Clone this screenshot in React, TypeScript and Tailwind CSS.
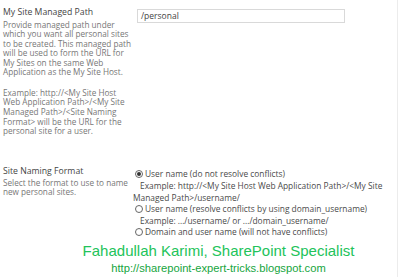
import React from "react";

const seg = { fontFamily: '"Open Sans", "Noto Sans", sans-serif' };

function Radio({ checked }: { checked?: boolean }) {
  return (
    <span className="inline-flex items-center justify-center w-[8px] h-[8px] rounded-full border border-[#666] ml-[1px] mr-[2px] shrink-0">
      {checked && <span className="w-[4px] h-[4px] rounded-full bg-[#333]" />}
    </span>
  );
}

export default function App() {
  return (
    <div className="w-[400px] h-[277px] bg-white overflow-hidden">
      <div className="w-[398px] h-[277px] border-r border-[#ececec] flex flex-col whitespace-nowrap" style={seg}>
        {/* Section 1 */}
        <div className="flex pt-[6px]">
          <div className="w-[137px] pl-[3px] shrink-0">
            <div className="text-[8.7px] leading-[12px] text-[#444]">My Site Managed Path</div>
            <div className="text-[8.2px] leading-[9.6px] text-[#777] mt-[1.5px]">
              <p>Provide managed path under<br />which you want all personal sites<br />to be created. This managed path<br />will be used to form the URL for<br />My Sites on the same Web<br />Application as the My Site Host.</p>
              <p className="mt-[10.8px]">Example: http://&lt;My Site Host<br />Web Application Path&gt;/&lt;My Site<br />Managed Path&gt;/&lt;Site Naming<br />Format&gt; will be the URL for the<br />personal site for a user.</p>
            </div>
          </div>
          <div className="pt-[3px]">
            <div className="w-[208px] h-[14px] border border-[#d9d9d9] flex items-center pl-[3px] text-[8.5px] text-[#444]">/personal</div>
          </div>
        </div>

        {/* Section 2 */}
        <div className="flex mt-[29px]">
          <div className="w-[133px] pl-[3px] shrink-0">
            <div className="text-[8.7px] leading-[12px] text-[#444]">Site Naming Format</div>
            <div className="text-[8.2px] leading-[9.6px] text-[#777] mt-[1px]">Select the format to use to name<br />new personal sites.</div>
          </div>
          <div className="text-[8.4px] leading-[11.6px] text-[#4a4a4a] pt-[3.5px]">
            <div className="flex items-center pl-[1px]"><Radio checked />User name (do not resolve conflicts)</div>
            <div className="pl-[7px]">Example: http://&lt;My Site Host Web Application Path&gt;/&lt;My Site</div>
            <div>Managed Path&gt;/username/</div>
            <div className="flex items-center pl-[1px]"><Radio />User name (resolve conflicts by using domain_username)</div>
            <div className="pl-[7px]">Example: .../username/ or .../domain_username/</div>
            <div className="flex items-center pl-[1px]"><Radio />Domain and user name (will not have conflicts)</div>
          </div>
        </div>

        {/* Footer */}
        <div className="pl-[40px] text-center mt-[4.6px]" style={{ fontFamily: '"Liberation Sans", Arial, sans-serif' }}>
          <div className="text-[15px] leading-[18px] text-[#22c35a]">Fahadullah Karimi, SharePoint Specialist</div>
          <div className="text-[11.2px] leading-[14px] text-[#16a540] mt-[0.6px]">http://sharepoint-expert-tricks.blogspot.com</div>
        </div>
      </div>
    </div>
  );
}
